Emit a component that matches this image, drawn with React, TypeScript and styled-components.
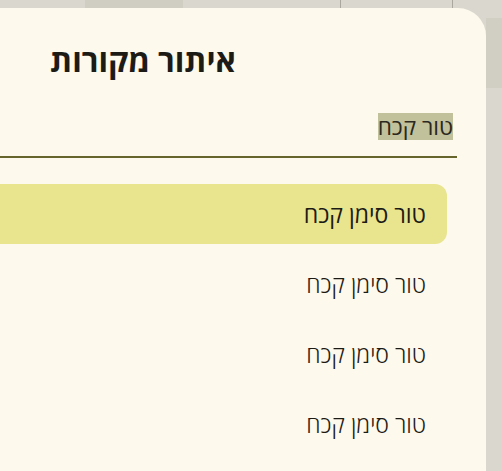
import React from 'react';
import styled, { createGlobalStyle } from 'styled-components';

const Global = createGlobalStyle`
  html, body { margin: 0; padding: 0; background: #dad8ce; overflow: hidden; }
  body { font-family: "Open Sans", "DejaVu Sans", sans-serif; color: #1d1b16; }
`;

const Screen = styled.div`
  width: 502px;
  height: 471px;
  display: flex;
  flex-direction: column;
  overflow: hidden;
`;

const TabStrip = styled.div`
  flex: 0 0 8px;
  height: 8px;
  display: flex;
  direction: ltr;
  overflow: hidden;
  background: #dad8ce;
`;

const Tab = styled.div<{ $w: number; $active?: boolean; $divider?: boolean }>`
  flex: 0 0 ${(p) => p.$w}px;
  box-sizing: border-box;
  background: ${(p) => (p.$active ? '#d0cec3' : 'transparent')};
  border-right: ${(p) => (p.$divider ? '1px solid #a9a79e' : 'none')};
  display: flex;
  align-items: flex-end;
  justify-content: center;
  overflow: hidden;
`;

const TabLabel = styled.span`
  direction: rtl;
  font-size: 14px;
  line-height: 14px;
  margin-bottom: 9px;
  color: #1d1b16;
  white-space: nowrap;
`;

const Body = styled.div`
  flex: 1;
  display: flex;
  direction: ltr;
`;

const Panel = styled.div`
  flex: 0 0 486px;
  background: #fdf9ed;
  border-top-right-radius: 28px;
  direction: rtl;
  display: flex;
  flex-direction: column;
  padding-top: 32px;
  box-sizing: border-box;
`;

const Side = styled.div`
  flex: 1;
  display: flex;
  flex-direction: column;
`;

const SideBand = styled.div<{ $h?: number; $dark?: boolean }>`
  flex: ${(p) => (p.$h ? `0 0 ${p.$h}px` : '1')};
  background: ${(p) => (p.$dark ? '#d1cfc4' : '#dad8ce')};
`;

const Title = styled.h1`
  margin: 0 250px 0 0;
  font-size: 31.5px;
  font-weight: 700;
  line-height: 40px;
  color: #1d1b16;
  white-space: nowrap;
`;

const Field = styled.div`
  margin: 33px 29px 0 0;
  padding: 0 4px 16px 0;
  border-bottom: 2px solid #66652b;
  display: flex;
`;

const Selected = styled.span`
  font-size: 22.5px;
  line-height: 27px;
  background: #c1c19b;
  color: #2a2820;
  white-space: nowrap;
`;

const List = styled.div`
  margin: 26px 39px 0 0;
  display: flex;
  flex-direction: column;
  gap: 10px;
`;

const Item = styled.div<{ $active?: boolean }>`
  height: 60px;
  flex: 0 0 60px;
  display: flex;
  align-items: center;
  padding-right: 21px;
  border-radius: 0 12px 12px 0;
  background: ${(p) => (p.$active ? '#e8e58e' : 'transparent')};
  font-size: 23px;
  font-weight: ${(p) => (p.$active ? 500 : 300)};
  color: #1d1b16;
`;

const tabs = [
  { w: 85, label: 'ימים' },
  { w: 98, label: 'ימים', active: true },
  { w: 158, label: 'ימים', divider: true },
  { w: 112, label: 'ימים', divider: true },
  { w: 49, label: 'ימים' },
];

export default function App() {
  return (
    <Screen>
      <Global />
      <TabStrip>
        {tabs.map((t, i) => (
          <Tab key={i} $w={t.w} $active={t.active} $divider={t.divider}>
            <TabLabel>{t.label}</TabLabel>
          </Tab>
        ))}
      </TabStrip>
      <Body>
        <Panel>
          <Title>איתור מקורות</Title>
          <Field>
            <Selected>טור קכח</Selected>
          </Field>
          <List>
            <Item $active>טור סימן קכח</Item>
            <Item>טור סימן קכח</Item>
            <Item>טור סימן קכח</Item>
            <Item>טור סימן קכח</Item>
          </List>
        </Panel>
        <Side>
          <SideBand $h={10} />
          <SideBand $h={70} $dark />
          <SideBand />
        </Side>
      </Body>
    </Screen>
  );
}
